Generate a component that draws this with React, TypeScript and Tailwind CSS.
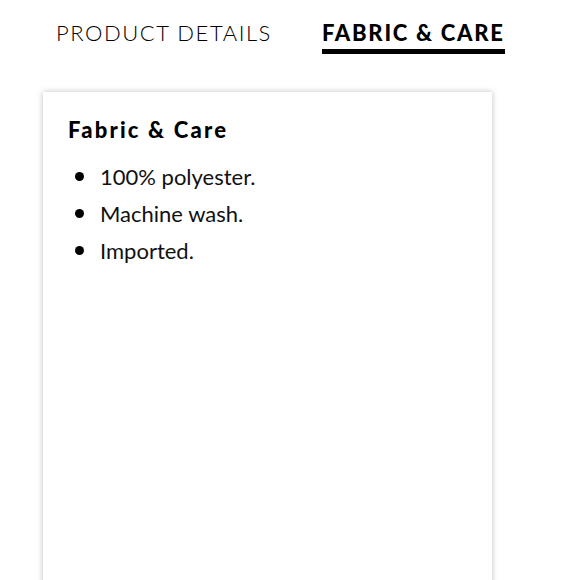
export default function App() {
  const items = ['100% polyester.', 'Machine wash.', 'Imported.'];
  return (
    <div className="h-[580px] w-[580px] overflow-hidden bg-white" style={{ fontFamily: 'Lato, "Open Sans", sans-serif' }}>
      <div className="flex items-start pl-[56px] pt-[18px]">
        <button className="text-[22px] font-light leading-[30px] tracking-[0.07em] text-black">PRODUCT DETAILS</button>
        <button className="ml-[50px] flex flex-col items-stretch">
          <span className="text-[22px] font-black leading-[30px] tracking-[0.08em] text-black">FABRIC &amp; CARE</span>
          <span className="mt-[1px] h-[5px] bg-black" />
        </button>
      </div>
      <div className="ml-[43px] mt-[38px] h-[520px] w-[449px] bg-white px-[25px] pt-[24px] shadow-[0_0_6px_rgba(0,0,0,0.25)]">
        <h5 className="text-[22px] font-black leading-[28px] tracking-[0.1em] text-black">Fabric &amp; Care</h5>
        <ul className="mt-[14px] flex flex-col">
          {items.map((t) => (
            <li key={t} className="flex items-center text-[22px] leading-[37px] text-[#111]">
              <span className="ml-[7px] mr-[16px] h-[9px] w-[9px] rounded-full bg-black" />
              {t}
            </li>
          ))}
        </ul>
      </div>
    </div>
  );
}
